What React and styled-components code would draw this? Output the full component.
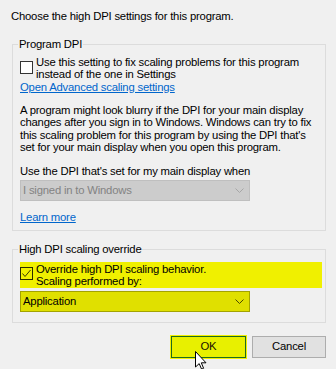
import React from 'react';
import styled, { createGlobalStyle } from 'styled-components';

const GlobalStyle = createGlobalStyle`
  body {
    margin: 0;
    background: #f0f0f0;
    font-family: "Liberation Sans", Arial, sans-serif;
    font-size: 11.3px;
    letter-spacing: -0.2px;
    line-height: 12.4px;
    color: #000;
  }
`;

const Dialog = styled.div`
  width: 336px;
  height: 369px;
  box-sizing: border-box;
  padding: 10px 10px 0 12px;
  overflow: hidden;
`;

const Intro = styled.div`
  margin-left: -1px;
  white-space: nowrap;
`;

const Group = styled.fieldset`
  margin: ${(p) => p.$top}px 0 0 0;
  padding: 0 3px ${(p) => p.$bottom}px 7px;
  border: 1px solid #dcdcdc;
  min-width: 0;
`;

const Legend = styled.legend`
  margin-left: -2px;
  padding: 0 1px;
  line-height: 12.4px;
`;

const CheckRow = styled.div`
  display: flex;
  align-items: flex-start;
  gap: 3px;
  margin-top: ${(p) => p.$top}px;
  padding: ${(p) => (p.$hl ? '1px 0 0' : '0')};
  background: ${(p) => (p.$hl ? '#f0f000' : 'transparent')};
`;

const Box = styled.span`
  flex: none;
  width: 11px;
  height: 11px;
  margin-top: ${(p) => p.$top}px;
  border: 1px solid ${(p) => (p.$checked ? '#2b2b00' : '#333')};
  background: ${(p) => (p.$checked ? '#f0f000' : '#fff')};
  display: flex;
  align-items: center;
  justify-content: center;
`;

const Text = styled.div`
  white-space: nowrap;
`;

const Link = styled.a`
  display: block;
  width: max-content;
  color: #0066cc;
  text-decoration: underline;
  margin-top: ${(p) => p.$top || 0}px;
  cursor: pointer;
`;

const Paragraph = styled.p`
  margin: ${(p) => p.$top}px 0 0;
  white-space: nowrap;
`;

const Select = styled.div`
  width: 221px;
  height: 19px;
  margin-top: ${(p) => p.$top}px;
  border: 1px solid ${(p) => (p.$disabled ? '#bfbfbf' : '#a3a300')};
  background: ${(p) => (p.$disabled ? '#cccccc' : '#e0e000')};
  color: ${(p) => (p.$disabled ? '#838383' : '#000')};
  display: flex;
  align-items: center;
  justify-content: space-between;
  padding: 0 5px 0 2px;
`;

const Buttons = styled.div`
  display: flex;
  justify-content: flex-end;
  gap: 6px;
  margin-top: 13px;
`;

const Button = styled.button`
  position: relative;
  width: ${(p) => p.$w}px;
  height: 22px;
  box-sizing: border-box;
  font: inherit;
  letter-spacing: inherit;
  padding: 0;
  color: ${(p) => (p.$primary ? '#1a1000' : '#000')};
  background: ${(p) => (p.$primary ? '#e8f000' : '#e1e1e1')};
  border: 1px solid ${(p) => (p.$primary ? '#1e6b1e' : '#adadad')};
  outline: ${(p) => (p.$primary ? '1px solid #f0f000' : 'none')};
  display: flex;
  align-items: center;
  justify-content: center;
`;

const Cursor = styled.svg`
  position: absolute;
  left: 23px;
  top: 14px;
  overflow: visible;
`;

function Chevron({ color }) {
  return (
    <svg width="9" height="5" viewBox="0 0 9 5">
      <path d="M0.5 0.5 L4.5 4.5 L8.5 0.5" fill="none" stroke={color} strokeWidth="1" />
    </svg>
  );
}

function Check() {
  return (
    <svg width="11" height="11" viewBox="0 0 11 11">
      <path d="M1.5 5.5 L4 8.5 L9.5 2" fill="none" stroke="#3b3b00" strokeWidth="1" />
    </svg>
  );
}

export default function App() {
  return (
    <>
      <GlobalStyle />
      <Dialog>
        <Intro>Choose the high DPI settings for this program.</Intro>

        <Group $top={16} $bottom={7}>
          <Legend>Program DPI</Legend>
          <CheckRow $top={5}>
            <Box $top={5} />
            <Text>
              Use this setting to fix scaling problems for this program
              <br />
              instead of the one in Settings
            </Text>
          </CheckRow>
          <Link>Open Advanced scaling settings</Link>
          <Paragraph $top={11}>
            A program might look blurry if the DPI for your main display
            <br />
            changes after you sign in to Windows. Windows can try to fix
            <br />
            this scaling problem for this program by using the DPI that's
            <br />
            set for your main display when you open this program.
          </Paragraph>
          <Paragraph $top={11}>Use the DPI that's set for my main display when</Paragraph>
          <Select $top={3} $disabled>
            <span>I signed in to Windows</span>
            <Chevron color="#a6a6a6" />
          </Select>
          <Link $top={10}>Learn more</Link>
        </Group>

        <Group $top={12} $bottom={10}>
          <Legend>High DPI scaling override</Legend>
          <CheckRow $top={6} $hl>
            <Box $top={4} $checked>
              <Check />
            </Box>
            <Text>
              Override high DPI scaling behavior.
              <br />
              Scaling performed by:
            </Text>
          </CheckRow>
          <Select $top={3}>
            <span>Application</span>
            <Chevron color="#4a4a00" />
          </Select>
        </Group>

        <Buttons>
          <Button $primary $w={75}>
            OK
            <Cursor width="12" height="19" viewBox="0 0 12 19">
              <path
                d="M0.5 0.5 L0.5 16 L4.2 12.6 L6.6 18.2 L8.6 17.3 L6.3 11.8 L11 11.8 Z"
                fill="#fff"
                stroke="#000"
                strokeWidth="1"
                strokeLinejoin="round"
              />
            </Cursor>
          </Button>
          <Button $w={74}>Cancel</Button>
        </Buttons>
      </Dialog>
    </>
  );
}
